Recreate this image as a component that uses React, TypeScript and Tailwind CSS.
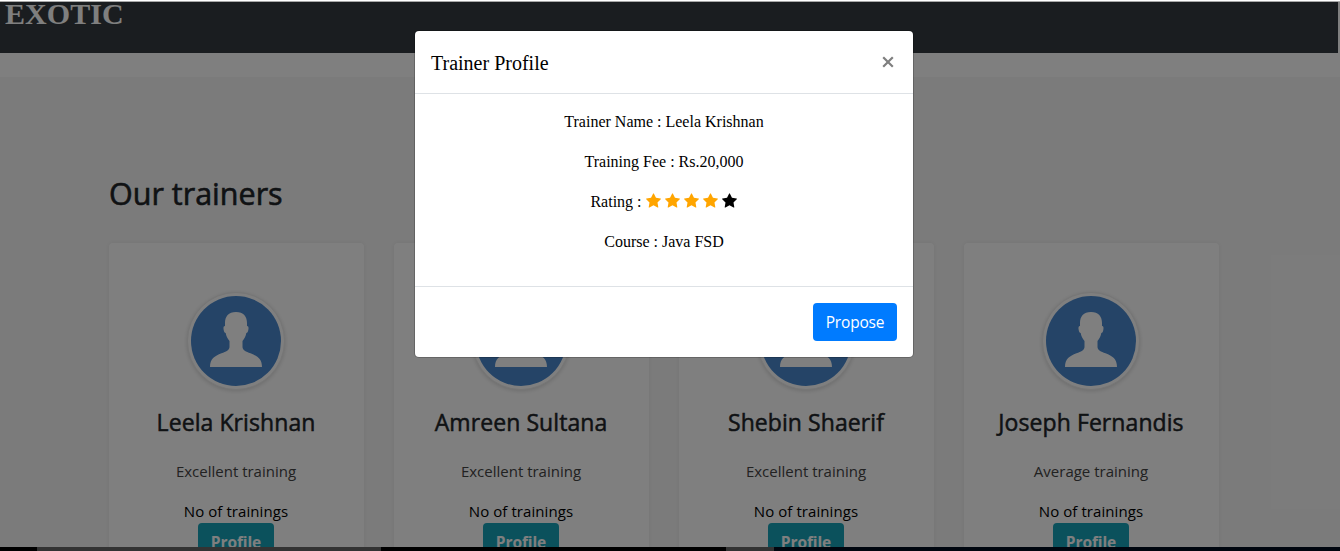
import React from "react";

type Trainer = { name: string; note: string };

const trainers: Trainer[] = [
  { name: "Leela Krishnan", note: "Excellent training" },
  { name: "Amreen Sultana", note: "Excellent training" },
  { name: "Shebin Shaerif", note: "Excellent training" },
  { name: "Joseph Fernandis", note: "Average training" },
];

function Avatar() {
  return (
    <div className="size-[98px] shrink-0 rounded-full border border-[#ececec] bg-white p-[3px] shadow-[0_1px_4px_rgba(0,0,0,0.15)]">
      <svg viewBox="0 0 90 90" className="size-[90px]">
        <circle cx="45" cy="45" r="45" fill="#4a89cf" />
        <path
          d="M45 16c-7.500 0-11 4.600-11 11v3c-1.700 0-1.700 2-1.300 4 .3 2 1 3 2 3 .4 3 1.600 5 3.800 8v6c0 3-3.500 4.700-8 6.300C23.500 60 19 63 19 71h52c0-8-4.500-11-11.500-13.700-4.500-1.600-8-3.300-8-6.300v-6c2.200-3 3.400-5 3.800-8 1 0 1.700-1 2-3 .4-2 .4-4-1.300-4v-3c0-6.400-3.500-11-11-11z"
          fill="#fff"
        />
      </svg>
    </div>
  );
}

function TrainerCard({ name, note }: Trainer) {
  return (
    <article className="flex h-[360px] w-[255px] flex-col items-center rounded bg-white pr-px pt-[49px] shadow-[0_0_5px_rgba(0,0,0,0.07)]">
      <Avatar />
      <h3 className="mt-[18px] text-[23px] leading-[29px] tracking-[0.08px] whitespace-nowrap text-[#212529] [-webkit-text-stroke:0.5px_#212529]">{name}</h3>
      <p className="mt-[22px] text-[15px] leading-6 text-[#444]">{note}</p>
      <p className="mt-4 text-[15px] leading-6 tracking-[0.08px] text-black">No of trainings</p>
      <button className="h-[38px] w-[76px] rounded bg-[#17a2b8] text-[15.500px] font-bold leading-[38px] tracking-[-0.1px] text-white">
        Profile
      </button>
    </article>
  );
}

function Star({ filled }: { filled: boolean }) {
  return (
    <svg viewBox="0 0 1664 1600" className={filled ? "h-[15px] w-[15px] fill-[#ffa500]" : "h-[15px] w-[15px] fill-black"}>
      <path d="M1664 615q0 22-26 48l-363 354 86 500q1 7 1 20 0 21-10.500 35.500t-30.500 14.500q-19 0-40-12l-449-236-449 236q-22 12-40 12-21 0-31.500-14.500t-10.500-35.500q0-6 2-20l86-500-364-354q-25-27-25-48 0-37 56-46l502-73 225-455q19-41 49-41t49 41l225 455 502 73q56 9 56 46z" />
    </svg>
  );
}

function Modal() {
  return (
    <section className="absolute left-[415px] top-[31px] flex h-[326px] w-[498px] flex-col rounded-[4px] bg-white text-black shadow-[0_0_0_1px_rgba(0,0,0,0.2)] font-['Liberation_Serif',serif]">
      <header className="flex h-[63px] items-center justify-between border-b border-[#dee2e6] px-4">
        <h5 className="pt-[2px] text-[20px] leading-[30px]">Trainer Profile</h5>
        <button aria-label="Close" className="mr-[3px]">
          <svg viewBox="0 0 12 12" className="size-3" stroke="#7f7f7f" strokeWidth="2.2">
            <path d="M1.200 1.200 10.800 10.800M10.800 1.200 1.200 10.800" />
          </svg>
        </button>
      </header>
      <div className="flex h-[192px] flex-col items-center gap-4 pt-4 text-[16px] leading-6">
        <p>Trainer Name : Leela Krishnan</p>
        <p>Training Fee : Rs.20,000</p>
        <p className="flex items-center pr-px">
          <span className="mr-1">Rating :</span>
          <span className="flex gap-1 pb-[3px]">
            {[1, 2, 3, 4, 5].map((n) => (
              <Star key={n} filled={n < 5} />
            ))}
          </span>
        </p>
        <p>Course : Java FSD</p>
      </div>
      <footer className="flex flex-1 items-center justify-end border-t border-[#dee2e6] px-4 font-['Open_Sans',sans-serif]">
        <button className="h-[38px] w-[84px] rounded bg-[#007bff] text-[15.500px] leading-[38px] tracking-[-0.2px] text-white">Propose</button>
      </footer>
    </section>
  );
}

export default function App() {
  return (
    <div className="relative h-[551px] w-[1340px] overflow-hidden bg-white font-['Open_Sans',sans-serif]">
      <div className="h-[547px] overflow-hidden pt-[2px]">
        <nav className="mr-[2px] flex h-[51px] items-start bg-[#343a40] pl-[5px]">
          <h1 className="-mt-[6px] font-['Liberation_Serif',serif] text-[30px] font-bold leading-[36px] tracking-[0.05px] text-white">EXOTIC</h1>
        </nav>
        <main className="mt-6 h-[500px] bg-[#f7f7f7] px-[109px] pt-[97px]">
          <h2 className="text-[30.500px] leading-[38px] text-[#212529] [-webkit-text-stroke:0.6px_#212529]">Our trainers</h2>
          <div className="mt-[31px] flex gap-[30px]">
            {trainers.map((t) => (
              <TrainerCard key={t.name} {...t} />
            ))}
          </div>
        </main>
      </div>
      <div className="flex h-1">
        <i className="w-[37px] bg-black" />
        <i className="w-[344px] bg-[#333]" />
        <i className="w-[345px] bg-black" />
        <i className="w-12 bg-[#333]" />
        <i className="flex-1 bg-[#00060f]" />
      </div>
      <div className="absolute inset-x-0 top-[2px] bottom-1 bg-black/50" />
      <div className="absolute inset-x-0 top-px h-px bg-[#a8a8a8]" />
      <Modal />
    </div>
  );
}
